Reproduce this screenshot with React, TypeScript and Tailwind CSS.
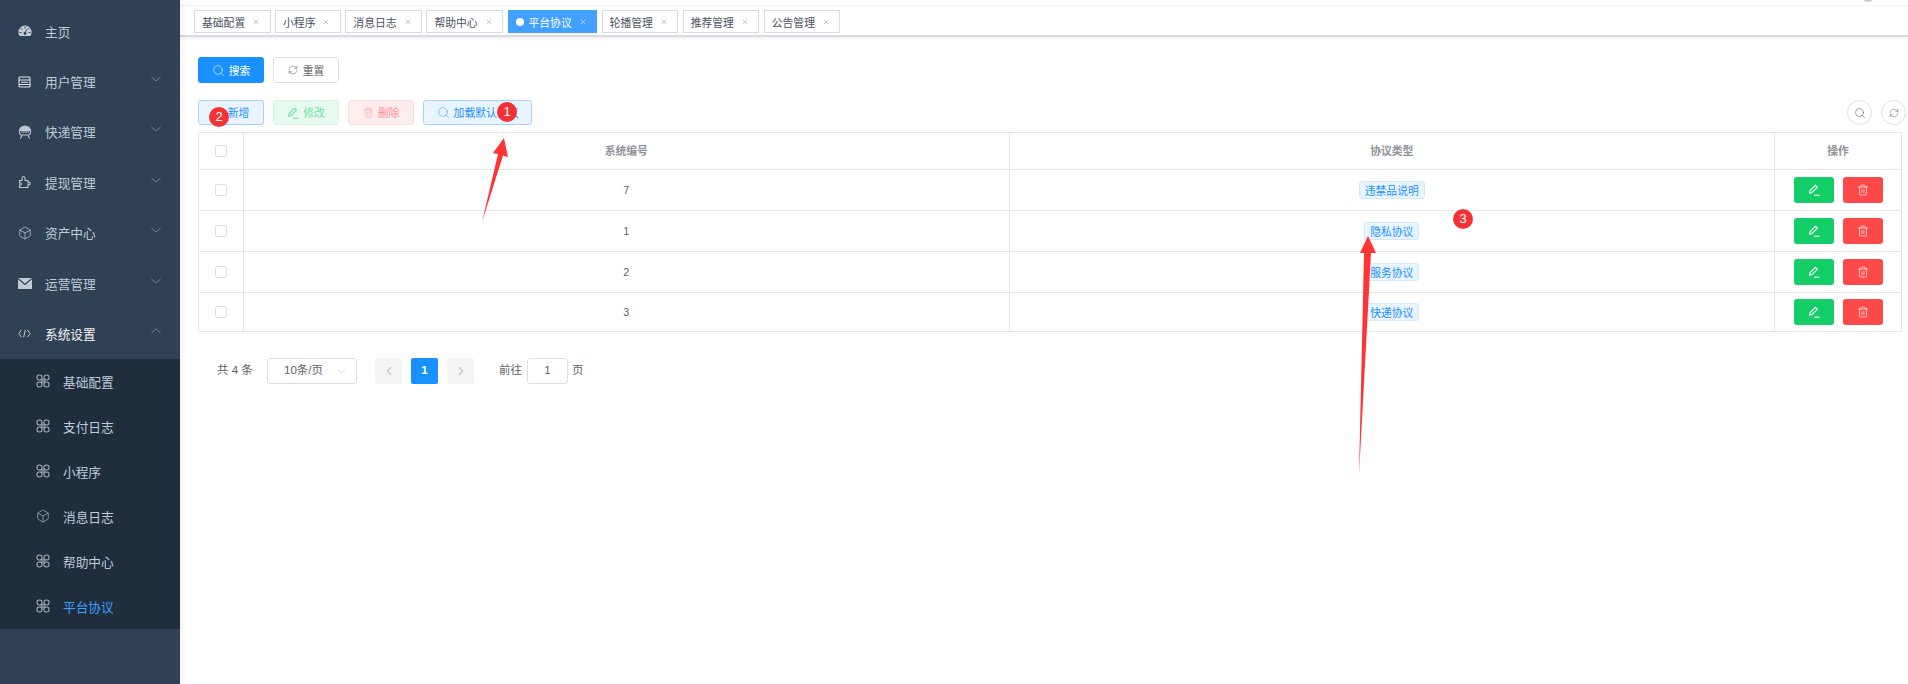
import React from "react";
import { Box, ChevronDown, ChevronLeft, ChevronRight, RefreshCw, Search, Trash2, X } from "lucide-react";

const FONT = "font-['Liberation_Sans','Noto_Sans_CJK_SC',sans-serif]";

const Gauge = () => (
  <svg width="14" height="12" viewBox="0 0 14 12" fill="#c3cbd6">
    <path d="M7 0.5A6.6 6.6 0 0 0 .4 7c0 1.6.5 2.9 1.3 4h10.6c.8-1.1 1.3-2.4 1.3-4A6.6 6.6 0 0 0 7 .5Z" />
    <g stroke="#304156" strokeWidth="1" fill="none">
      <path d="M7 1.5v2M3 3.2l1.3 1.4M11 3.2 9.7 4.6M1.5 7.5h2M10.5 7.5h2M7 8l1.6-3.5" />
    </g>
    <circle cx="7" cy="8.5" r="1.4" fill="#304156" />
  </svg>
);

const Doc = () => (
  <svg width="13" height="12" viewBox="0 0 13 12" fill="none" stroke="#dfe4ea" strokeWidth="1.1">
    <rect x="1" y="1" width="11" height="10" rx="1" />
    <path d="M1 4h11M3 6.3h7M1 8.5h11" />
  </svg>
);

const Robot = () => (
  <svg width="14" height="14" viewBox="0 0 14 14" fill="none" stroke="#bfc7d2" strokeWidth="1.1">
    <path d="M1.5 6A5.5 5 0 0 1 12.5 6" fill="#bfc7d2" />
    <path d="M1.5 5.5v2c0 1.5 1.5 2.5 2.5 2.5h6c1 0 2.5-1 2.5-2.5v-2M3 7h8M4 10 2.5 13.5M10 10l1.5 3.5" />
  </svg>
);

const PuzzlePiece = () => (
  <svg width="14" height="14" viewBox="0 0 14 14" fill="none" stroke="#bfc7d2" strokeWidth="1.1">
    <path d="M1.5 5.5H4V3.5C4 2.5 4.5 1.5 5.5 1.5S7 2.5 7 3.5V5.5H10V7.7C10.3 7.3 10.8 7.2 11.3 7.3 12.3 7.5 12.5 9.5 11.3 9.8 10.8 9.9 10.3 9.7 10 9.4V12.5H1.5V10C2.8 10.3 3.5 9.7 3.5 9S2.8 7.7 1.5 8Z" />
  </svg>
);

const Mail = () => (
  <svg width="14" height="11" viewBox="0 0 14 11">
    <rect width="14" height="11" fill="#c3cbd6" />
    <path d="M0 .5 7 6.5 14 .5" fill="none" stroke="#304156" strokeWidth="1.2" />
  </svg>
);

const Code = () => (
  <svg width="13" height="9" viewBox="0 0 13 9" fill="none" stroke="#bfc7d2" strokeWidth="1">
    <path d="M3.5 1 .8 4.5 3.5 8M9.5 1l2.7 3.5L9.5 8M7.3 .8 5.7 8.2" />
  </svg>
);

const Loops = () => (
  <svg width="14" height="14" viewBox="0 0 14 14" fill="none" stroke="#a3acb8" strokeWidth="1.1">
    <rect x="1" y="1" width="5" height="5" rx="2.2" />
    <rect x="8" y="1" width="5" height="5" rx="2.2" />
    <rect x="1" y="8" width="5" height="5" rx="2.2" />
    <rect x="8" y="8" width="5" height="5" rx="2.2" />
    <path d="M6 4.5v5M8 4.5v5M4.5 6h5M4.5 8h5" strokeWidth="0.8" />
  </svg>
);

const Caret = ({ up = false }: { up?: boolean }) => (
  <svg width="10" height="6" viewBox="0 0 10 6" fill="none" stroke="#7e8a98" strokeWidth="0.9" className="mb-[5px]">
    <path d={up ? "M.5 5 5 1 9.5 5" : "M.5 1 5 5 9.5 1"} />
  </svg>
);

const Pen = ({ color = "#fff" }: { color?: string }) => (
  <svg width="12" height="12" viewBox="0 0 11 11" fill="none" stroke={color} strokeWidth="1">
    <path d="M1.5 8.5 2 6 6.8 1.2l1.8 1.8L3.8 7.8Z" />
    <path d="M5.5 10.3h5" />
  </svg>
);

const menu: [string, React.ReactNode, boolean?][] = [
  ["主页", <Gauge />],
  ["用户管理", <Doc />, true],
  ["快递管理", <Robot />, true],
  ["提现管理", <PuzzlePiece />, true],
  ["资产中心", <Box size={14} color="#bfc7d2" strokeWidth={1.3} />, true],
  ["运营管理", <Mail />, true],
];

const subMenu = ["基础配置", "支付日志", "小程序", "消息日志", "帮助中心", "平台协议"];
const tags = ["基础配置", "小程序", "消息日志", "帮助中心", "平台协议", "轮播管理", "推荐管理", "公告管理"];
const rows = [
  { id: "7", type: "违禁品说明", h: "h-[41px]" },
  { id: "1", type: "隐私协议", h: "h-[41px]" },
  { id: "2", type: "服务协议", h: "h-[41px]" },
  { id: "3", type: "快递协议", h: "h-[39px]" },
];

function Badge({ n, className }: { n: string; className: string }) {
  return (
    <div className={`absolute w-[20px] h-[20px] rounded-full bg-[#f33333] text-white text-[13px] flex items-center justify-center ${className}`}>
      {n}
    </div>
  );
}

export default function App() {
  return (
    <div className={`relative flex h-[684px] w-[1908px] overflow-hidden bg-white ${FONT}`}>
      <aside className="relative z-10 w-[180px] shrink-0 bg-[#304156] pt-[6px] shadow-[3px_0_6px_rgba(0,21,41,0.05)]">
        {menu.map(([label, icon, arrow]) => (
          <div key={label} className="flex h-[50.4px] items-center pl-[18px] pr-[19px] text-[12.7px] text-[#bfcbd9]">
            <span className="flex w-[27px] shrink-0 items-center">{icon}</span>
            <span className="flex-1 pt-[4px]">{label}</span>
            {arrow && <Caret />}
          </div>
        ))}
        <div className="flex h-[50.4px] items-center pl-[18px] pr-[19px] text-[12.7px] text-[#f4f4f5]">
          <span className="flex w-[27px] shrink-0 items-center"><Code /></span>
          <span className="flex-1 pt-[4px]">系统设置</span>
          <Caret up />
        </div>
        <div className="bg-[#1f2d3d]">
          {subMenu.map((label, i) => (
            <div key={label} className={`flex h-[45px] items-center pl-[36px] text-[12.7px] ${i === 5 ? "text-[#409eff]" : "text-[#bfcbd9]"}`}>
              <span className="flex w-[27px] shrink-0 items-center">
                {i === 3 ? <Box size={14} color="#a3acb8" strokeWidth={1.3} /> : <Loops />}
              </span>
              <span className="pt-[4px]">{label}</span>
            </div>
          ))}
        </div>
      </aside>

      <main className="flex min-w-0 flex-1 flex-col">
        <div className="relative h-[6px] border-b border-[#f1f2f5] bg-white">
          <div className="absolute right-[33px] top-[-12px] h-[14px] w-[14px] rounded-full bg-[#c9ccd3]" />
        </div>
        <div className="flex h-[31px] items-start gap-[4.5px] border-b-2 border-[#d8dce5] pl-[14px] pt-[4px] shadow-[0_2px_3px_rgba(0,21,41,0.06)]">
          {tags.map((t) => {
            const active = t === "平台协议";
            return (
              <div
                key={t}
                className={`flex h-[23px] items-center border pl-[7px] pr-[9.4px] text-[10.8px] ${active ? "border-[#42a0ff] bg-[#42a0ff] text-white" : "border-[#d8dce5] bg-white text-[#495060]"}`}
              >
                {active && <span className="mr-[5px] h-[8px] w-[8px] rounded-full bg-white" />}
                <span className="pt-[3px]">{t}</span>
                <X size={8} strokeWidth={1.5} className={`ml-[7px] ${active ? "text-white" : "text-[#8d95a3]"}`} />
              </div>
            );
          })}
        </div>

        <div className="pl-[18px] pr-[6px] pt-[20px]">
          <div className="flex gap-[9px]">
            <button className="flex h-[26px] w-[66px] items-center justify-center gap-[4px] rounded-[3px] bg-[#1890ff] text-[10.8px] text-white">
              <Search size={13} strokeWidth={1.2} /><span className="pt-[3px]">搜索</span>
            </button>
            <button className="flex h-[26px] w-[66px] items-center justify-center gap-[5px] rounded-[3px] border border-[#dcdfe6] bg-white text-[10.8px] text-[#606266]">
              <RefreshCw size={10} strokeWidth={1.3} /><span className="pt-[3px]">重置</span>
            </button>
          </div>

          <div className="mt-[17px] flex items-center gap-[9px]">
            <button className="flex h-[25px] w-[66px] items-center justify-center gap-[5px] rounded-[3px] border border-[#a3d3ff] bg-[#e8f4ff] pl-[15px] text-[10.8px] text-[#1890ff]">
              <span className="pt-[2px]">新增</span>
            </button>
            <button className="flex h-[25px] w-[66px] items-center justify-center gap-[4px] rounded-[3px] border border-[#d0f5e0] bg-[#e7faf0] text-[10.8px] text-[#71e2a3]">
              <Pen color="#71e2a3" /><span className="pt-[2px]">修改</span>
            </button>
            <button className="flex h-[25px] w-[66px] items-center justify-center gap-[4px] rounded-[3px] border border-[#ffdbdb] bg-[#ffeded] text-[10.8px] text-[#ff9292]">
              <Trash2 size={11} strokeWidth={1.2} /><span className="pt-[2px]">删除</span>
            </button>
            <button className="flex h-[25px] w-[109px] items-center justify-center gap-[4px] rounded-[3px] border border-[#a3d3ff] bg-[#e8f4ff] text-[10.8px] text-[#1890ff]">
              <Search size={13} strokeWidth={1.1} className="text-[#5c9cf0]" /><span className="pt-[2px]">加载默认协议</span>
            </button>
            <div className="-mr-[4px] ml-auto flex gap-[9px]">
              <span className="flex h-[25px] w-[25px] items-center justify-center rounded-full border border-[#dcdfe6] text-[#606266]">
                <Search size={12} strokeWidth={1.2} />
              </span>
              <span className="flex h-[25px] w-[25px] items-center justify-center rounded-full border border-[#dcdfe6] text-[#606266]">
                <RefreshCw size={10} strokeWidth={1.2} />
              </span>
            </div>
          </div>

          <table className="mt-[7px] w-full table-fixed border-collapse text-[10.8px] text-[#606266]">
            <colgroup>
              <col className="w-[45px]" />
              <col />
              <col />
              <col className="w-[127px]" />
            </colgroup>
            <thead>
              <tr className="h-[37px] text-[#909399]">
                <th className="border border-[#dfe6ec] font-bold">
                  <span className="mx-auto block h-[12px] w-[12px] rounded-[2px] border border-[#dcdfe6]" />
                </th>
                <th className="border border-[#dfe6ec] font-bold">系统编号</th>
                <th className="border border-[#dfe6ec] font-bold">协议类型</th>
                <th className="border border-[#dfe6ec] font-bold">操作</th>
              </tr>
            </thead>
            <tbody>
              {rows.map((r) => (
                <tr key={r.id} className={r.h}>
                  <td className="border border-[#dfe6ec]">
                    <span className="mx-auto block h-[12px] w-[12px] rounded-[2px] border border-[#dcdfe6]" />
                  </td>
                  <td className="border border-[#dfe6ec] text-center">{r.id}</td>
                  <td className="border border-[#dfe6ec] text-center">
                    <span className="inline-flex h-[18px] items-center rounded-[3px] border border-[#d1e9ff] bg-[#e8f4ff] px-[5px] pt-[2px] text-[#1890ff]">{r.type}</span>
                  </td>
                  <td className="border border-[#dfe6ec]">
                    <div className="flex justify-center gap-[9px]">
                      <span className="flex h-[26px] w-[40px] items-center justify-center rounded-[3px] bg-[#13ce66]"><Pen /></span>
                      <span className="flex h-[26px] w-[40px] items-center justify-center rounded-[3px] bg-[#ff4949] text-white"><Trash2 size={12} strokeWidth={1.3} /></span>
                    </div>
                  </td>
                </tr>
              ))}
            </tbody>
          </table>

          <div className="mt-[26px] flex h-[26px] items-center pl-[19px] text-[11.5px] text-[#606266]">
            <span className="w-[50px]">共 4 条</span>
            <div className="flex h-[26px] w-[90px] items-center justify-between rounded-[3px] border border-[#dcdfe6] pl-[16px] pr-[8px]">
              10条/页<ChevronDown size={13} color="#c0c4cc" strokeWidth={1.2} />
            </div>
            <span className="ml-[18px] flex h-[26px] w-[27px] items-center justify-center rounded-[2px] bg-[#f4f4f5] text-[#c0c4cc]"><ChevronLeft size={14} /></span>
            <span className="ml-[9px] flex h-[26px] w-[27px] items-center justify-center rounded-[2px] bg-[#1890ff] font-bold text-white">1</span>
            <span className="ml-[9px] flex h-[26px] w-[27px] items-center justify-center rounded-[2px] bg-[#f4f4f5] text-[#c0c4cc]"><ChevronRight size={14} /></span>
            <span className="ml-[25px]">前往</span>
            <span className="ml-[5px] flex h-[26px] w-[41px] items-center justify-center rounded-[3px] border border-[#dcdfe6]">1</span>
            <span className="ml-[4px]">页</span>
          </div>
        </div>
      </main>

      <svg className="absolute left-0 top-0 z-20" width="1908" height="684" fill="#ff3333">
        <polygon points="482,222 498,154 493,153 504,138 508,157 503,155.5" />
        <polygon points="1359,475 1364,253 1360,253 1368,236 1376,253 1371,253" />
      </svg>
      <Badge n="1" className="z-30 left-[497px] top-[102px]" />
      <Badge n="2" className="z-30 left-[209px] top-[107px]" />
      <Badge n="3" className="z-30 left-[1453px] top-[209px]" />
    </div>
  );
}
